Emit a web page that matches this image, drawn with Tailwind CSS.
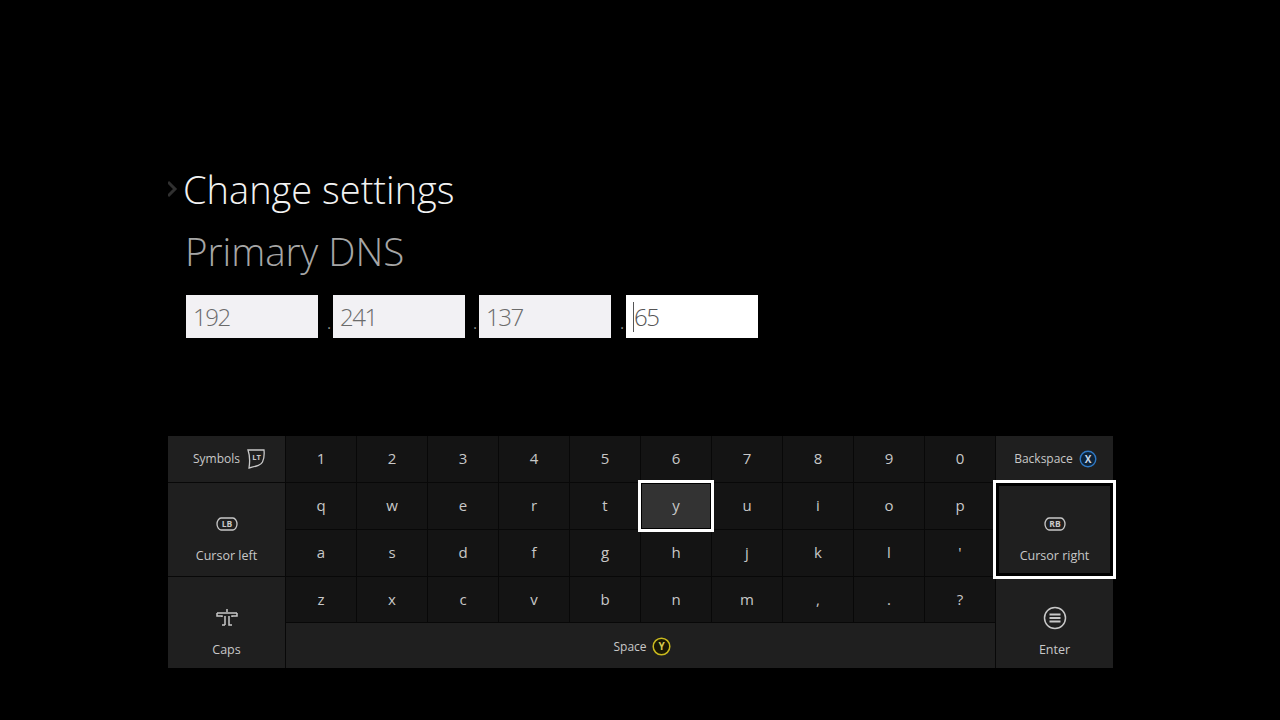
<!DOCTYPE html>
<html lang="en">

<head>
  <meta charset="UTF-8">
  <title>Change settings</title>
  <script src="https://cdn.jsdelivr.net/npm/@tailwindcss/browser@4"></script>
</head>

<body class="bg-black h-screen overflow-hidden font-['Open_Sans',sans-serif]">
  <div class="pt-[163px] pl-[168px]">
    <div class="flex items-center h-[52px]">
      <svg class="w-[15px] h-[20px]" viewBox="0 0 15 20" fill="none" stroke="#303030" stroke-width="3"><path d="M0 3l7 7-7 7" /></svg>
      <h1 class="text-[38px] font-light text-[#f2f2f2] leading-none">Change settings</h1>
    </div>
    <h2 class="mt-[12px] pl-[17px] text-[38.500px] font-light text-[#a6a6a6] leading-[48px]">Primary DNS</h2>

    <!-- ip fields -->
    <div class="mt-[20px] pl-[18px] flex h-[43px]">
      <div class="w-[132px] bg-[#f2f1f4] pl-[7px] text-[24px] tracking-[-1.5px] font-light text-[#6b6b6b] leading-[43px]">192</div>
      <span class="w-[15px] pr-[2px] text-right text-[#999] text-[14px] leading-[58px]">.</span>
      <div class="w-[132px] bg-[#f2f1f4] pl-[7px] text-[24px] tracking-[-1.5px] font-light text-[#6b6b6b] leading-[43px]">241</div>
      <span class="w-[14px] pr-[2px] text-right text-[#999] text-[14px] leading-[58px]">.</span>
      <div class="w-[132px] bg-[#f2f1f4] pl-[7px] text-[24px] tracking-[-1.5px] font-light text-[#6b6b6b] leading-[43px]">137</div>
      <span class="w-[15px] pr-[2px] text-right text-[#999] text-[14px] leading-[58px]">.</span>
      <div class="w-[132px] bg-white pl-[7px] flex items-center text-[24px] tracking-[-1.5px] font-light text-[#555] leading-[43px]"><span class="w-px h-[30px] bg-[#555]"></span>65</div>
    </div>

    <!-- keyboard -->
    <div class="mt-[98px] w-[945px] grid grid-cols-[117px_repeat(10,70px)_117px] grid-rows-[46px_46px_46px_45px_45px] gap-px bg-[#080808] text-[15px] text-[#c8c8c8]">
      <div class="bg-[#1f1f1f] flex items-center justify-center gap-[6px] pl-[6px] text-[12px]">Symbols
        <svg class="w-[20px] h-[22px]" viewBox="0 0 20 22" fill="none" stroke="#c8c8c8" stroke-width="1.300"><path d="M2 2h16c.5 5 0 9-1.500 12-1.500 3-5 4-13.500 6 1-6 1-12-1-18z" /><text x="10.500" y="12" fill="#c8c8c8" stroke="none" font-size="7.500" font-weight="700" text-anchor="middle">LT</text></svg>
      </div>
      <div class="bg-[#141414] pb-px flex items-center justify-center">1</div>
      <div class="bg-[#141414] pb-px flex items-center justify-center">2</div>
      <div class="bg-[#141414] pb-px flex items-center justify-center">3</div>
      <div class="bg-[#141414] pb-px flex items-center justify-center">4</div>
      <div class="bg-[#141414] pb-px flex items-center justify-center">5</div>
      <div class="bg-[#141414] pb-px flex items-center justify-center">6</div>
      <div class="bg-[#141414] pb-px flex items-center justify-center">7</div>
      <div class="bg-[#141414] pb-px flex items-center justify-center">8</div>
      <div class="bg-[#141414] pb-px flex items-center justify-center">9</div>
      <div class="bg-[#141414] pb-px flex items-center justify-center">0</div>
      <div class="bg-[#1f1f1f] flex items-center justify-center gap-[6px] pl-[2px] text-[12px]">Backspace
        <svg class="w-[18px] h-[18px]" viewBox="0 0 18 18" fill="none"><circle cx="9" cy="9" r="7.800" stroke="#2f78c4" stroke-width="1.400" fill="#0d2338" /><text x="9" y="12.500" fill="#c8d8e8" font-size="10" font-weight="700" text-anchor="middle">X</text></svg>
      </div>

      <div class="row-span-2 bg-[#1f1f1f] flex flex-col items-center pt-[34px] text-[12.500px]">
        <svg class="w-[22px] h-[14px]" viewBox="0 0 22 14" fill="none" stroke="#c8c8c8" stroke-width="1.300"><path d="M5 1h12c2 0 4 3 4 6s-2 6-4 6H5c-2 0-4-3-4-6s2-6 4-6z" /><text x="11" y="10" fill="#c8c8c8" stroke="none" font-size="8.500" font-weight="700" text-anchor="middle">LB</text></svg>
        <span class="mt-[16px]">Cursor left</span>
      </div>
      <div class="bg-[#141414] pb-px flex items-center justify-center">q</div>
      <div class="bg-[#141414] pb-px flex items-center justify-center">w</div>
      <div class="bg-[#141414] pb-px flex items-center justify-center">e</div>
      <div class="bg-[#141414] pb-px flex items-center justify-center">r</div>
      <div class="bg-[#141414] pb-px flex items-center justify-center">t</div>
      <div class="relative z-10 bg-[#333333] outline-3 outline-white border border-black pb-px flex items-center justify-center">y</div>
      <div class="bg-[#141414] pb-px flex items-center justify-center">u</div>
      <div class="bg-[#141414] pb-px flex items-center justify-center">i</div>
      <div class="bg-[#141414] pb-px flex items-center justify-center">o</div>
      <div class="bg-[#141414] pb-px flex items-center justify-center">p</div>
      <div class="row-span-2 relative z-10 bg-[#1f1f1f] outline-3 outline-white border-[3px] border-black flex flex-col items-center pt-[31px] text-[12.500px]">
        <svg class="w-[22px] h-[14px]" viewBox="0 0 22 14" fill="none" stroke="#c8c8c8" stroke-width="1.300"><path d="M5 1h12c2 0 4 3 4 6s-2 6-4 6H5c-2 0-4-3-4-6s2-6 4-6z" /><text x="11" y="10" fill="#c8c8c8" stroke="none" font-size="8.500" font-weight="700" text-anchor="middle">RB</text></svg>
        <span class="mt-[16px]">Cursor right</span>
      </div>

      <div class="bg-[#141414] pb-px flex items-center justify-center">a</div>
      <div class="bg-[#141414] pb-px flex items-center justify-center">s</div>
      <div class="bg-[#141414] pb-px flex items-center justify-center">d</div>
      <div class="bg-[#141414] pb-px flex items-center justify-center">f</div>
      <div class="bg-[#141414] pb-px flex items-center justify-center">g</div>
      <div class="bg-[#141414] pb-px flex items-center justify-center">h</div>
      <div class="bg-[#141414] pb-px flex items-center justify-center">j</div>
      <div class="bg-[#141414] pb-px flex items-center justify-center">k</div>
      <div class="bg-[#141414] pb-px flex items-center justify-center">l</div>
      <div class="bg-[#141414] pb-px flex items-center justify-center">'</div>

      <div class="row-span-2 bg-[#1f1f1f] flex flex-col items-center pt-[31px] text-[12.500px]">
        <svg class="w-[24px] h-[20px]" viewBox="0 0 24 20" fill="none" stroke="#c8c8c8" stroke-width="1.500"><path d="M12 1v3M2 5h20M2 5v3h5v1M22 5v3h-5v1M10 8v9M14 8v9h3M10 17H7" /></svg>
        <span class="mt-[13px]">Caps</span>
      </div>
      <div class="bg-[#141414] pb-px flex items-center justify-center">z</div>
      <div class="bg-[#141414] pb-px flex items-center justify-center">x</div>
      <div class="bg-[#141414] pb-px flex items-center justify-center">c</div>
      <div class="bg-[#141414] pb-px flex items-center justify-center">v</div>
      <div class="bg-[#141414] pb-px flex items-center justify-center">b</div>
      <div class="bg-[#141414] pb-px flex items-center justify-center">n</div>
      <div class="bg-[#141414] pb-px flex items-center justify-center">m</div>
      <div class="bg-[#141414] pb-px flex items-center justify-center">,</div>
      <div class="bg-[#141414] pb-px flex items-center justify-center">.</div>
      <div class="bg-[#141414] pb-px flex items-center justify-center">?</div>
      <div class="row-span-2 bg-[#1f1f1f] flex flex-col items-center pt-[29px] text-[12.500px]">
        <svg class="w-[24px] h-[24px]" viewBox="0 0 24 24" fill="none" stroke="#c8c8c8"><circle cx="12" cy="12" r="10.500" stroke-width="1.500" /><path d="M6.500 8.500h11M6.500 12h11M6.500 15.500h11" stroke-width="1.800" /></svg>
        <span class="mt-[11px]">Enter</span>
      </div>

      <div class="col-span-10 bg-[#1f1f1f] flex items-center justify-center gap-[5px] pl-[3px] pt-[2px] text-[12px]">Space
        <svg class="w-[19px] h-[19px]" viewBox="0 0 19 19" fill="none"><circle cx="9.500" cy="9.500" r="8.300" stroke="#c9b91e" stroke-width="1.500" fill="#1a1805" /><text x="9.500" y="13" fill="#d8cc50" font-size="10" font-weight="700" text-anchor="middle">Y</text></svg>
      </div>
    </div>
  </div>
</body>

</html>
